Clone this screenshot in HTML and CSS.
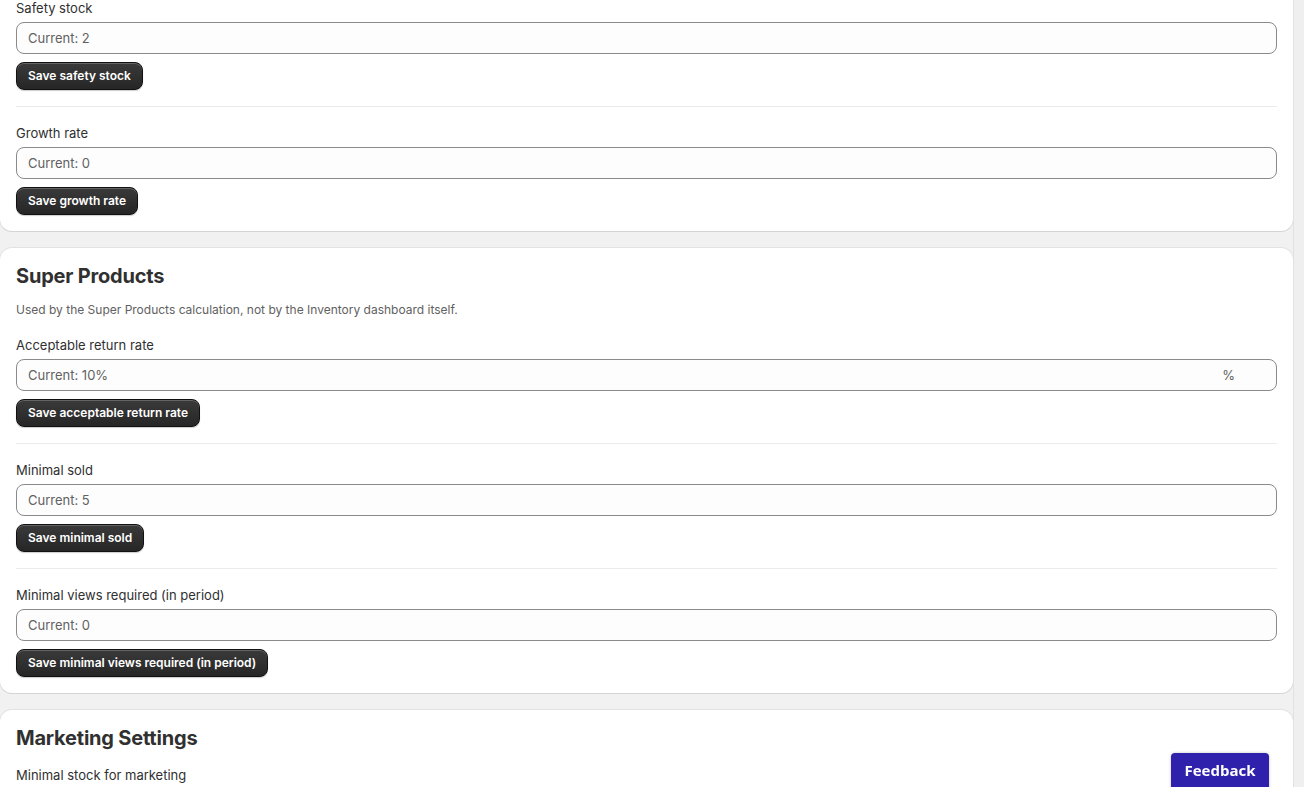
FILE: index.html
```html
<!DOCTYPE html>
<html lang="en">
<head>
<meta charset="utf-8">
<title>Settings</title>
<link rel="stylesheet" href="styles.css">
</head>
<body>
<div class="layout">
  <main class="page">
    <section class="card card-cut">
      <div class="field">
        <label class="label">Safety stock</label>
        <div class="input"><span class="ph">Current: 2</span></div>
        <div><button class="btn">Save safety stock</button></div>
      </div>
      <hr class="divider">
      <div class="field">
        <label class="label">Growth rate</label>
        <div class="input"><span class="ph">Current: 0</span></div>
        <div><button class="btn">Save growth rate</button></div>
      </div>
    </section>

    <section class="card">
      <h2 class="title">Super Products</h2>
      <p class="desc">Used by the Super Products calculation, not by the Inventory dashboard itself.</p>
      <div class="field">
        <label class="label">Acceptable return rate</label>
        <div class="input"><span class="ph">Current: 10%</span><span class="suffix">%</span></div>
        <div><button class="btn">Save acceptable return rate</button></div>
      </div>
      <hr class="divider">
      <div class="field">
        <label class="label">Minimal sold</label>
        <div class="input"><span class="ph">Current: 5</span></div>
        <div><button class="btn">Save minimal sold</button></div>
      </div>
      <hr class="divider">
      <div class="field">
        <label class="label">Minimal views required (in period)</label>
        <div class="input"><span class="ph">Current: 0</span></div>
        <div><button class="btn">Save minimal views required (in period)</button></div>
      </div>
    </section>

    <section class="card">
      <h2 class="title">Marketing Settings</h2>
      <div class="field">
        <label class="label">Minimal stock for marketing</label>
        <div class="input"><span class="ph">Current: 0</span></div>
        <div><button class="btn">Save minimal stock for marketing</button></div>
      </div>
    </section>
  </main>
  <div class="scrolltrack"></div>
</div>
<button class="feedback">Feedback</button>
</body>
</html>
```

FILE: styles.css
```css
* { box-sizing: border-box; }
html, body {
  margin: 0;
  height: 100%;
  overflow: hidden;
}
body {
  background: #f1f1f1;
  font-family: Inter, "Noto Sans", "Liberation Sans", sans-serif;
  color: #303030;
  font-size: 13px;
  line-height: 20px;
}
.layout {
  display: flex;
  height: 787px;
  overflow: hidden;
}
.page {
  width: 1293px;
  display: flex;
  flex-direction: column;
  gap: 17px;
}
.scrolltrack {
  flex: 1;
  background: #efefef;
  border-left: 1px solid #e2e2e2;
}
.card {
  background: #ffffff;
  border-radius: 12px;
  box-shadow: 0 1px 0 0 rgba(26,26,26,0.07), 0 0 0 1px rgba(0,0,0,0.06);
  padding: 16px;
  display: flex;
  flex-direction: column;
}
.card-cut {
  margin-top: -18px;
}
.field {
  display: flex;
  flex-direction: column;
}
.label {
  display: block;
  height: 20px;
  margin-bottom: 4px;
  color: #303030;
}
.input {
  height: 32px;
  border: 1px solid #8a8a8a;
  border-radius: 8px;
  background: #fdfdfd;
  display: flex;
  align-items: center;
  padding: 0 11px;
  margin-bottom: 8px;
}
.ph {
  flex: 1;
  color: #616161;
}
.suffix {
  color: #616161;
  margin-right: 30px;
}
.btn {
  font-family: Inter, "Noto Sans", "Liberation Sans", sans-serif;
  font-size: 12px;
  font-weight: 600;
  line-height: 16px;
  color: #ffffff;
  background: linear-gradient(#3a3a3a, #262626);
  border: 1px solid #111;
  border-radius: 8px;
  height: 28px;
  padding: 0 11px;
  box-shadow: inset 0 1px 0 rgba(255,255,255,0.22), 0 1px 1px rgba(0,0,0,0.2);
  cursor: pointer;
}
.divider {
  border: 0;
  border-top: 1px solid #ebebeb;
  margin: 16px 0 16px;
}
.title {
  margin: 0;
  font-size: 20px;
  line-height: 24px;
  font-weight: 650;
  color: #303030;
  letter-spacing: -0.2px;
}
.desc {
  margin: 12px 0 15px;
  font-size: 12px;
  line-height: 20px;
  color: #616161;
}
.title + .field {
  margin-top: 15px;
}
.feedback {
  position: fixed;
  left: 1171px;
  top: 753px;
  width: 98px;
  height: 44px;
  background: #3021ad;
  color: #ffffff;
  border: 0;
  border-radius: 4px 4px 0 0;
  font-family: "Open Sans", "Noto Sans", sans-serif;
  font-weight: 700;
  font-size: 15px;
  padding: 0 0 10px;
  box-shadow: 0 0 3px rgba(0,0,0,0.25);
}
```
